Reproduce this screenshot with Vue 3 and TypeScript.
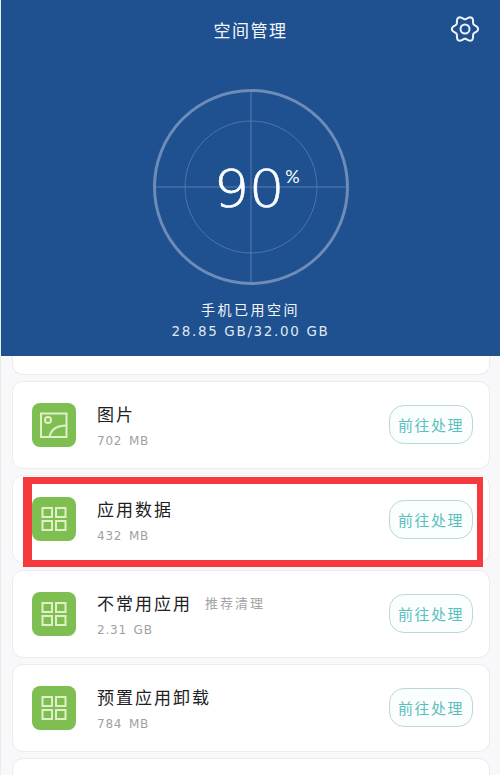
<script setup lang="ts">
interface Row {
  name: string
  size: string
  hint?: string
  icon: 'image' | 'apps'
}

const rows: Row[] = [
  { name: '图片', size: '702 MB', icon: 'image' },
  { name: '应用数据', size: '432 MB', icon: 'apps' },
  { name: '不常用应用', size: '2.31 GB', hint: '推荐清理', icon: 'apps' },
  { name: '预置应用卸载', size: '784 MB', icon: 'apps' },
]

// Six-lobed outline of the settings gear, lobes pointing left and right.
const gearPath = Array.from({ length: 120 }, (_, i) => {
  const angle = (i / 120) * Math.PI * 2
  const radius = 11.4 + 1.7 * Math.cos(6 * angle)
  const x = 15 + radius * Math.cos(angle)
  const y = 14 + radius * Math.sin(angle)
  return `${i === 0 ? 'M' : 'L'}${x.toFixed(2)} ${y.toFixed(2)}`
}).join('') + 'Z'
</script>

<template>
  <div class="page">
    <header class="hero">
      <div class="topbar">
        <h1 class="title">空间管理</h1>
        <svg class="gear" viewBox="0 0 30 28" fill="none" stroke="currentColor" stroke-width="2" stroke-linejoin="round">
          <path :d="gearPath" />
          <circle cx="15" cy="14" r="4.500" />
        </svg>
      </div>

      <div class="dial">
        <svg class="dial-art" viewBox="0 0 198 198" fill="none">
          <circle cx="99" cy="99" r="96.500" stroke="#6c8cb9" stroke-width="3" />
          <circle cx="99" cy="99" r="66" stroke="#4f74a8" stroke-width="1" />
          <path d="M99 4V194M4 99H194" stroke="#5a7eae" stroke-width="1" />
        </svg>
        <div class="reading">
          <span class="value">90</span><span class="unit">%</span>
        </div>
      </div>

      <p class="used-label">手机已用空间</p>
      <p class="used-value">28.85 GB/32.00 GB</p>
    </header>

    <main class="list">
      <div class="card stub"></div>
      <article v-for="row in rows" :key="row.name" class="card">
        <div class="tile">
          <svg v-if="row.icon === 'image'" viewBox="0 0 44 44" fill="none" stroke="#dff0c8" stroke-width="2">
            <rect x="9" y="10.500" width="25.500" height="23.500" />
            <circle cx="16" cy="17" r="3" />
            <path d="M17.500 34C19 26.500 24.500 22.500 34.500 22.500" />
          </svg>
          <svg v-else viewBox="0 0 44 44" fill="none" stroke="#dff0c8" stroke-width="2">
            <rect x="10.500" y="11" width="9.500" height="9" />
            <rect x="24" y="11" width="9.500" height="9" />
            <rect x="10.500" y="24" width="9.500" height="9" />
            <rect x="24" y="24" width="9.500" height="9" />
          </svg>
        </div>
        <div class="info">
          <div class="name-line">
            <span class="name">{{ row.name }}</span>
            <span v-if="row.hint" class="hint">{{ row.hint }}</span>
          </div>
          <span class="size">{{ row.size }}</span>
        </div>
        <button class="action" type="button">前往处理</button>
      </article>
      <div class="card"></div>
    </main>

    <div class="highlight"></div>
  </div>
</template>

<style scoped>
.page {
  position: relative;
  width: 500px;
  height: 775px;
  overflow: hidden;
  background: #f8f8fa;
  border-left: 1px solid #e4efe9;
  box-sizing: border-box;
  font-family: "Noto Sans CJK SC", "DejaVu Sans", sans-serif;
}
.hero {
  height: 356px;
  background: #1f508f;
  color: #f2f6fb;
  display: flex;
  flex-direction: column;
  align-items: center;
}
.topbar {
  position: relative;
  width: 100%;
  height: 58px;
}
.title {
  margin: 20px 0 0;
  text-align: center;
  font-size: 17px;
  line-height: 20px;
  font-weight: 400;
  letter-spacing: 1.500px;
}
.gear {
  position: absolute;
  top: 14.500px;
  right: 20.500px;
  width: 30px;
  height: 28px;
  color: #eef3fa;
}
.dial {
  position: relative;
  width: 198px;
  height: 198px;
  margin-top: 30px;
  display: flex;
  align-items: center;
  justify-content: center;
}
.dial-art {
  position: absolute;
  inset: 0;
  width: 100%;
  height: 100%;
}
.reading {
  position: relative;
  display: flex;
  align-items: flex-start;
  color: #fbfdff;
  margin-left: 15px;
  margin-top: 3px;
}
.value {
  font-family: "DejaVu Sans", Lato, sans-serif;
  font-size: 52px;
  line-height: 60px;
  font-weight: 200;
  transform: scaleX(1.07);
  -webkit-text-stroke: 0.6px #fbfdff;
}
.unit {
  font-family: Lato, sans-serif;
  font-size: 18px;
  line-height: 20px;
  margin-top: 7px;
  margin-left: 3px;
  font-weight: 400;
}
.used-label {
  margin: 13px 0 0;
  font-size: 14px;
  line-height: 20px;
  letter-spacing: 2.500px;
}
.used-value {
  margin: 2px 0 0;
  font-family: "DejaVu Sans", sans-serif;
  font-size: 13.500px;
  line-height: 20px;
  letter-spacing: 1.650px;
  color: #dfe8f3;
}
.list {
  display: flex;
  flex-direction: column;
  gap: 6.300px;
  padding: 0 10px 0 11px;
}
.card {
  flex: 0 0 88px;
  box-sizing: border-box;
  display: flex;
  align-items: center;
  padding: 0 16px 0 19px;
  background: #fff;
  border: 1px solid #ececee;
  border-radius: 11px;
}
.stub {
  flex-basis: 18.700px;
  border-top: 0;
  border-radius: 0 0 11px 11px;
}
.tile {
  flex: none;
  width: 44px;
  height: 44px;
  border-radius: 8px;
  background: #7fbf52;
}
.tile svg {
  display: block;
  width: 44px;
  height: 44px;
}
.info {
  flex: 1;
  min-width: 0;
  margin-left: 21px;
  padding-top: 3px;
  display: flex;
  flex-direction: column;
  gap: 8px;
}
.name-line {
  display: flex;
  align-items: center;
  gap: 13px;
}
.name {
  font-size: 17px;
  line-height: 22px;
  letter-spacing: 2px;
  color: #202022;
}
.hint {
  font-size: 13px;
  line-height: 22px;
  letter-spacing: 2px;
  color: #a3a3a5;
}
.size {
  font-family: "DejaVu Sans", sans-serif;
  font-size: 12px;
  line-height: 16px;
  letter-spacing: 0.800px;
  color: #9f9fa1;
  word-spacing: 2px;
}
.action {
  flex: none;
  width: 84px;
  height: 39px;
  padding: 0;
  background: #fafefe;
  border: 1px solid #bcd8d6;
  border-radius: 15px;
  font-family: inherit;
  font-size: 15px;
  letter-spacing: 1.500px;
  color: #5bc0bd;
}
.highlight {
  position: absolute;
  left: 22px;
  top: 477px;
  width: 460px;
  height: 90px;
  box-sizing: border-box;
  border: solid #f5393c;
  border-width: 7px 6px 7px 9px;
}
</style>
